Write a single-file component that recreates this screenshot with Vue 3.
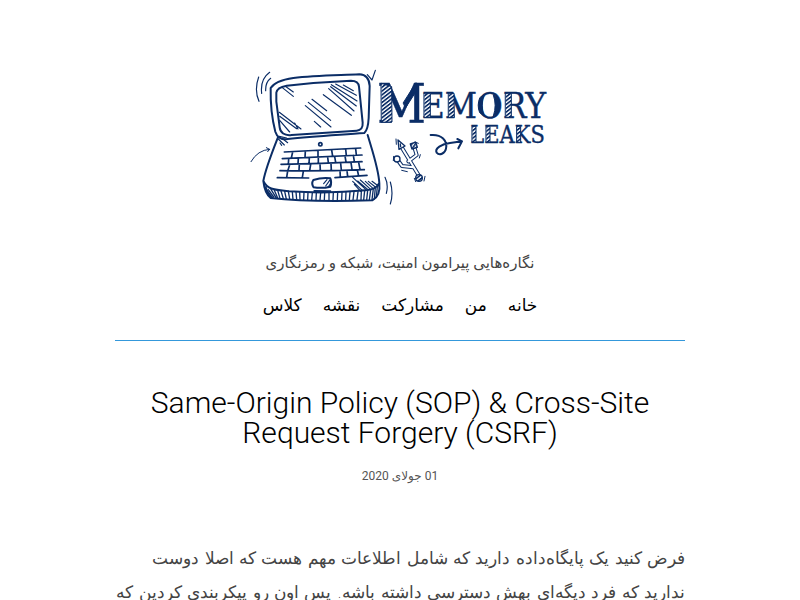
<script setup>
const links = ['خانه', 'من', 'مشارکت', 'نقشه', 'کلاس']
</script>

<template>
  <div class="page" dir="rtl" lang="fa">
    <header class="masthead">
      <a class="logo" href="#" aria-label="Memory Leaks">
        <svg viewBox="0 0 930 465" direction="ltr" fill="none" stroke="#0b2d66" stroke-width="5" stroke-linecap="round" stroke-linejoin="round">
          <defs>
            <pattern id="hatch" width="9" height="9" patternUnits="userSpaceOnUse" patternTransform="rotate(-38)">
              <rect width="9" height="9" fill="#fff" stroke="none" />
              <rect width="9" height="5" fill="#0b2d66" stroke="none" />
            </pattern>
          </defs>
          <!-- lid and screen -->
          <path stroke-width="6" d="M77 84C88 66 112 59 145 54C210 46 280 46 343 43C362 44 373 57 374 78L371 174C370 194 366 212 358 219C280 225 205 229 128 237C108 241 95 229 91 215C82 180 76 130 77 84Z" />
          <path stroke-width="6" d="M94 98C96 84 108 80 125 77L205 69L318 62C332 62 341 68 342 80L353 188C354 203 348 211 335 212L140 225C118 228 106 218 104 202L94 125Z" />
          <path d="M123 80L145 96M111 82L145 109M103 157L168 207M149 189L159 207M104 169L155 206M104 181L134 216M201 118L245 152M190 127L257 181M181 137L258 201M208 184L227 201M235 104L319 166M251 86L327 153M257 80L334 138M259 74L336 123M272 72L334 106M295 75L325 92" stroke-width="3.5" />
          <!-- keyboard deck -->
          <path stroke-width="6" d="M99 232C86 265 62 325 55 363C57 382 61 402 77 414C165 424 280 424 382 421C400 412 406 397 403 370C401 327 382 273 368 225M56 364C69 393 100 389 132 394C220 400 300 397 362 391C385 389 396 382 402 370M62 382C66 396 72 402 82 413" />
          <circle cx="226" cy="253" r="5" stroke-width="5" />
          <path d="M118 276Q230 270 347 264M112 296Q230 291 351 285M108 313Q230 311 351 305M105 332Q230 334 358 329M97 353L191 354M270 353L366 346M143 276L139 294M181 274L180 292M219 272L219 291M260 270L263 289M302 267L304 287M332 266L334 285M131 297L130 312M160 295L159 312M193 294L192 311M220 293L220 311M248 292L250 307M269 290L272 307M300 288L303 306M325 286L328 304M134 314L129 331M163 313L162 332M197 313L194 332M225 312L226 332M258 311L259 331M287 310L289 330M318 308L321 328M341 307L345 328M128 333L125 352M175 334L172 352M285 332L286 351M306 332L308 350M337 330L341 348" />
          <path stroke-width="6" d="M205 360Q230 352 256 355Q261 367 256 380Q231 386 206 382Q198 371 205 360ZM208 393L256 394" />
          <path stroke-width="3.5" d="M236 371L246 359M242 378L254 361M249 381L258 370M100 237L118 255M111 235L128 248M103 229L125 234M105 249L110 256M323 364L352 391M328 373L347 394M323 352L362 388M338 363L369 389M346 360L377 388M361 364L384 385M370 364L391 381M381 364L400 378" />
          <path stroke-width="4" d="M70 389L86 411M78 388L93 413M88 391L98 414M98 391L105 415M108 393L115 416M119 394L124 417M130 394L134 417M142 396L144 418M153 396L155 419M164 396L165 419M177 397L176 420M189 397L188 420M202 398L200 420M214 398L213 420M227 398L225 420M239 398L238 420M252 398L252 420M265 398L264 420M278 397L277 420M291 397L290 420M303 396L302 420M315 396L313 420M327 395L324 420M339 395L336 419M349 393L348 420M359 392L356 420M368 391L365 420M377 389L373 420M385 386L381 419M391 382L388 417M397 379L394 412" />
          <!-- motion lines -->
          <g stroke-width="3.5">
            <path d="M41 51Q27 90 42 124M74 37Q45 58 50 100M77 55Q61 67 62 92M367 44L381 60L391 31M420 352Q431 374 424 400M436 366Q446 400 436 432" />
            <path stroke-width="3" d="M18 305Q38 270 74 268M64 263L74 268L68 275" />
          </g>
          <!-- looping arrow -->
          <path stroke-width="6" d="M557 225C590 222 608 242 603 266C600 281 583 288 575 278C568 265 590 252 615 249L651 244M637 237L651 244L640 265" />
          <!-- connector trident -->
          <g stroke-width="12">
            <path d="M521 346L469 260M490 304L515 285L508 262M505 322L471 318L458 300" />
            <path stroke="#fff" stroke-width="6" d="M521 346L469 260M490 304L515 285L508 262M505 322L471 318L458 300" />
            <path fill="#fff" stroke-width="4" d="M459 240L480 258L462 268ZM466 252L467 260" />
            <rect x="498" y="249" width="17" height="16" transform="rotate(-18 506 257)" fill="url(#hatch)" stroke-width="4" />
            <circle cx="456" cy="297" r="9" fill="#fff" stroke-width="4" />
            <circle cx="522" cy="354" r="10" fill="url(#hatch)" stroke-width="4" />
            <path stroke-width="3" d="M453 237L454 253M510 246L520 250M446 289L445 302M508 355L512 365M540 349L537 363M470 331L487 335M526 284L523 294" />
          </g>
          <g class="wordmark" fill="#0b2d66" stroke-width="1">
            <text class="initial" x="396" y="188">M</text>
            <text class="word" x="530" y="174">EMORY</text>
            <text class="subword" x="676" y="249">LEAKS</text>
          </g>
          <!-- hatched stems over the lettering -->
          <g fill="url(#hatch)" stroke-width="3">
            <path d="M409 70L440 80L441 186L410 187ZM538 100L556 100L556 172L538 172ZM611 100L627 100L628 172L611 172ZM782 100L799 100L799 172L782 172ZM682 199L693 199L693 247L682 247ZM724 199L735 199L735 247L724 247ZM816 199L827 199L827 247L816 247Z" />
            <path fill="#0b2d66" d="M475 128L513 68L516 90L482 143Z" />
            <path fill="#0b2d66" d="M704 114Q695 136 704 158L717 168Q706 136 717 105ZM758 114Q768 136 758 158L745 168Q756 136 745 105Z" />
          </g>
        </svg>
      </a>
      <p class="tagline">نگاره‌هایی پیرامون امنیت، شبکه و رمزنگاری</p>
      <nav class="menu">
        <a v-for="link in links" :key="link" href="#">{{ link }}</a>
      </nav>
    </header>
    <main>
      <article>
        <h1 dir="ltr">Same-Origin Policy (SOP) &amp; Cross-Site Request Forgery (CSRF)</h1>
        <time datetime="2020-07-01">01 جولای 2020</time>
        <p class="body">فرض کنید یک پایگاه‌داده دارید که شامل اطلاعات مهم هست که اصلا دوست ندارید که فرد دیگه‌ای بهش دسترسی داشته باشه. پس اون رو پیکربندی کردین که</p>
      </article>
    </main>
  </div>
</template>

<style>
html {
  background: #fff;
}
body {
  overflow: hidden;
  height: 100vh;
}
</style>

<style scoped>
.page {
  max-width: 570px;
  margin: 0 auto;
  padding: 60px 16px 0;
  color: #000;
  font-family: Roboto, "DejaVu Sans", sans-serif;
}
.masthead {
  display: flex;
  flex-direction: column;
  align-items: center;
  padding-bottom: 21px;
  border-bottom: 1px solid #3498db;
}
.logo {
  display: block;
  width: 310px;
  max-width: 100%;
}
.logo svg {
  display: block;
  width: 100%;
}
.wordmark {
  font-family: "DejaVu Serif Condensed", "DejaVu Serif", serif;
}
.initial {
  font-size: 160px;
}
.word {
  font-size: 105px;
}
.subword {
  font-size: 70px;
}
.tagline {
  margin: 36px 0 0;
  color: #444;
  font-size: 15px;
  line-height: 24px;
}
.menu {
  display: flex;
  gap: 21px;
  margin-top: 16px;
}
.menu a {
  color: #000;
  font-size: 17px;
  line-height: 28px;
  text-decoration: none;
}
article {
  display: flex;
  flex-direction: column;
  padding-top: 47px;
}
h1 {
  margin: 0;
  font-size: 30px;
  font-weight: 300;
  line-height: 30px;
  text-align: center;
}
time {
  margin-top: 18px;
  color: #555;
  font-size: 12px;
  line-height: 20px;
  text-align: center;
}
.body {
  margin: 55px 0 0;
  color: #444;
  font-family: "DejaVu Sans", sans-serif;
  font-size: 17px;
  font-weight: 300;
  line-height: 34px;
}
</style>
